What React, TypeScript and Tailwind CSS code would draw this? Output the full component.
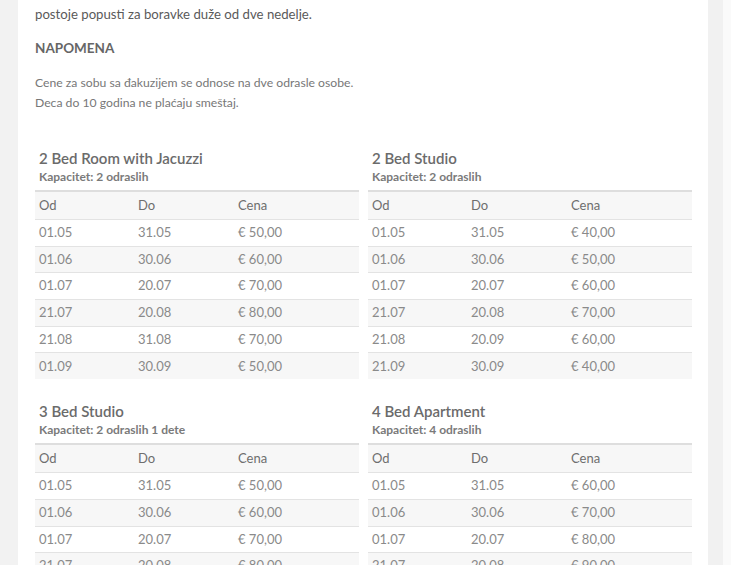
import React from "react";

type Row = [string, string, string];

const tables: { title: string; cap: string; rows: Row[] }[] = [
  {
    title: "2 Bed Room with Jacuzzi",
    cap: "Kapacitet: 2 odraslih",
    rows: [
      ["01.05", "31.05", "€ 50,00"],
      ["01.06", "30.06", "€ 60,00"],
      ["01.07", "20.07", "€ 70,00"],
      ["21.07", "20.08", "€ 80,00"],
      ["21.08", "31.08", "€ 70,00"],
      ["01.09", "30.09", "€ 50,00"],
    ],
  },
  {
    title: "2 Bed Studio",
    cap: "Kapacitet: 2 odraslih",
    rows: [
      ["01.05", "31.05", "€ 40,00"],
      ["01.06", "30.06", "€ 50,00"],
      ["01.07", "20.07", "€ 60,00"],
      ["21.07", "20.08", "€ 70,00"],
      ["21.08", "20.09", "€ 60,00"],
      ["21.09", "30.09", "€ 40,00"],
    ],
  },
  {
    title: "3 Bed Studio",
    cap: "Kapacitet: 2 odraslih 1 dete",
    rows: [
      ["01.05", "31.05", "€ 50,00"],
      ["01.06", "30.06", "€ 60,00"],
      ["01.07", "20.07", "€ 70,00"],
      ["21.07", "20.08", "€ 80,00"],
    ],
  },
  {
    title: "4 Bed Apartment",
    cap: "Kapacitet: 4 odraslih",
    rows: [
      ["01.05", "31.05", "€ 60,00"],
      ["01.06", "30.06", "€ 70,00"],
      ["01.07", "20.07", "€ 80,00"],
      ["21.07", "20.08", "€ 90,00"],
    ],
  },
];

function PriceTable({ title, cap, rows }: { title: string; cap: string; rows: Row[] }) {
  return (
    <div>
      <div className="pl-1 text-[15px] leading-[20px] font-semibold text-[#6b6b6b]">{title}</div>
      <div className="pl-1 mt-px text-[12px] leading-[16px] font-bold text-[#7a7a7a]">{cap}</div>
      <div className="mt-[5px] border-t-2 border-[#dedede]">
        <div className="grid grid-cols-[100px_100px_1fr] h-[27px] items-center bg-[#f7f7f7] text-[13px] text-[#6e6e6e]">
          <div className="pl-1">Od</div>
          <div className="pl-[3px]">Do</div>
          <div className="pl-[3px]">Cena</div>
        </div>
        {rows.map((r, i) => (
          <div
            key={i}
            className={
              "grid grid-cols-[100px_100px_1fr] h-[26.7px] items-center border-t border-[#e3e3e3] text-[13px] text-[#8a8a8a] " +
              (i % 2 === 1 ? "bg-[#f7f7f7]" : "bg-white")
            }
          >
            <div className="pl-1">{r[0]}</div>
            <div className="pl-[3px]">{r[1]}</div>
            <div className="pl-[3px]">{r[2]}</div>
          </div>
        ))}
      </div>
    </div>
  );
}

export default function App() {
  return (
    <div
      className="flex min-h-screen bg-[#f3f3f3] overflow-hidden"
      style={{ fontFamily: "Lato, 'Open Sans', sans-serif", height: 565 }}
    >
      <div className="w-[18px] shrink-0 bg-[#f2f2f2]" />
      <div className="flex-1 bg-white pl-[17px] pr-[16px] pt-[4px]">
        <p className="text-[13.2px] leading-[20px] text-[#5a5a5a]">
          postoje popusti za boravke duže od dve nedelje.
        </p>
        <p className="mt-[14px] text-[13.5px] leading-[20px] font-bold text-[#666]">NAPOMENA</p>
        <p className="mt-[15px] text-[12.2px] leading-[20px] text-[#777]">
          Cene za sobu sa đakuzijem se odnose na dve odrasle osobe.
          <br />
          Deca do 10 godina ne plaćaju smeštaj.
        </p>
        <div className="mt-[35px] grid grid-cols-2 gap-x-[9px] gap-y-[22px]">
          {tables.map((t, i) => (
            <PriceTable key={i} {...t} />
          ))}
        </div>
      </div>
      <div className="w-[15px] shrink-0 bg-[#f1f1f1]" />
      <div className="w-[8px] shrink-0 bg-[#fafafa]" />
    </div>
  );
}
